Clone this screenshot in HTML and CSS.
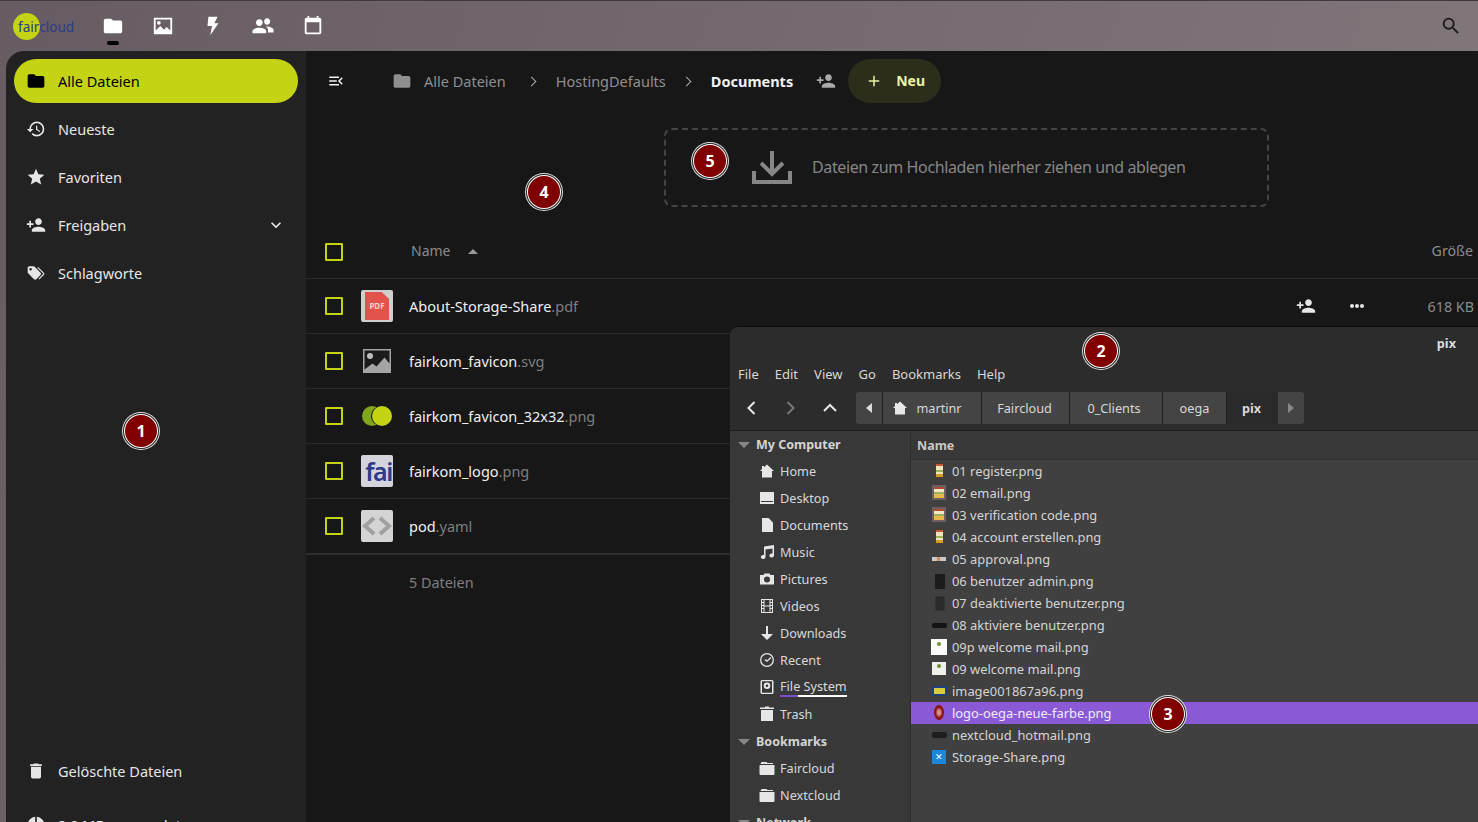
FILE: index.html
```html
<!DOCTYPE html>
<html lang="de">
<head>
    <meta charset="UTF-8">
    <meta name="viewport" content="width=device-width, initial-scale=1.0">
    <title>Alle Dateien - fairCloud</title>
    <link rel="stylesheet" href="styles.css">
</head>
<body>
    <svg class="icon-defs" aria-hidden="true">
        <symbol id="i-folder" viewBox="0 0 24 24"><path d="M10 4H4c-1.1 0-2 .9-2 2v12c0 1.1.9 2 2 2h16c1.1 0 2-.9 2-2V8c0-1.1-.9-2-2-2h-8l-2-2z"/></symbol>
        <symbol id="i-image" viewBox="0 0 24 24"><path fill-rule="evenodd" d="M2 3h20v18H2V3zm2 2v12l5-5 4 4 3-3 4 4V5H4zm3.500 1.500a2 2 0 1 1 0 4 2 2 0 0 1 0-4z"/></symbol>
        <symbol id="i-bolt" viewBox="0 0 24 24"><path d="M7 2h10l-3.500 7H18L9 22l2-10H6z"/></symbol>
        <symbol id="i-people" viewBox="0 0 24 24"><path d="M16.500 10.500c1.900 0 3.300-1.500 3.300-3.500s-1.400-3.500-3.300-3.500-3.300 1.500-3.300 3.500 1.400 3.500 3.300 3.500zm-8.500 1.500c2 0 3.700-1.700 3.700-3.800S10 4.500 8 4.500 4.300 6.100 4.300 8.200 6 12 8 12zm0 2c-2.700 0-7.500 1.300-7.500 3.700V20h15v-2.300C15.500 15.300 10.700 14 8 14zm8.500-1.500c-.4 0-.9 0-1.400.1 1.300.9 2.400 2.400 2.400 4.100V19h6v-2.800c0-2.300-4.500-3.700-7-3.700z"/></symbol>
        <symbol id="i-calendar" viewBox="0 0 24 24"><path d="M19 3h-1V1h-2v2H8V1H6v2H5c-1.100 0-2 .9-2 2v14c0 1.100.9 2 2 2h14c1.100 0 2-.9 2-2V5c0-1.100-.9-2-2-2zm0 16H5V8h14v11z"/></symbol>
        <symbol id="i-search" viewBox="0 0 24 24"><path d="M15.500 14h-.79l-.28-.27A6.471 6.471 0 0 0 16 9.500 6.500 6.500 0 1 0 9.500 16c1.610 0 3.090-.59 4.230-1.570l.27.28v.79l5 4.990L20.490 19l-4.990-5zm-6 0C7.010 14 5 11.990 5 9.500S7.010 5 9.500 5 14 7.010 14 9.500 11.990 14 9.500 14z"/></symbol>
        <symbol id="i-history" viewBox="0 0 24 24"><path d="M13 3a9 9 0 0 0-9 9H1l3.890 3.890.07.14L9 12H6c0-3.870 3.130-7 7-7s7 3.130 7 7-3.130 7-7 7c-1.930 0-3.680-.79-4.940-2.060l-1.420 1.420A8.954 8.954 0 0 0 13 21a9 9 0 0 0 0-18zm-1 5v5l4.280 2.540.72-1.210-3.500-2.080V8H12z"/></symbol>
        <symbol id="i-star" viewBox="0 0 24 24"><path d="M12 17.270L18.180 21l-1.640-7.030L22 9.240l-7.190-.61L12 2 9.190 8.630 2 9.240l5.460 4.730L5.820 21z"/></symbol>
        <symbol id="i-share" viewBox="0 0 24 24"><path d="M15 12c2.210 0 4-1.790 4-4s-1.790-4-4-4-4 1.790-4 4 1.790 4 4 4zm-9-2V7H4v3H1v2h3v3h2v-3h3v-2H6zm9 4c-2.670 0-8 1.340-8 4v2h16v-2c0-2.660-5.330-4-8-4z"/></symbol>
        <symbol id="i-tags" viewBox="0 0 24 24"><path d="M5.500 9A1.500 1.500 0 0 0 7 7.500 1.500 1.500 0 0 0 5.500 6 1.500 1.500 0 0 0 4 7.500 1.500 1.500 0 0 0 5.500 9m11.910 2.580c.36.36.59.86.59 1.420 0 .55-.22 1.050-.59 1.410l-5 5c-.36.36-.86.59-1.410.59-.55 0-1.050-.22-1.420-.59l-6.990-6.990C2.220 12.050 2 11.550 2 11V6c0-1.110.89-2 2-2h5c.55 0 1.050.22 1.410.58l7 7m-3.870-5.870l1-1 6.870 6.870c.37.36.59.87.59 1.420 0 .55-.22 1.050-.58 1.410l-5.380 5.380-1-1L20.750 13l-7.210-7.290z"/></symbol>
        <symbol id="i-trash" viewBox="0 0 24 24"><path d="M6 19c0 1.100.9 2 2 2h8c1.100 0 2-.9 2-2V7H6v12zM19 4h-3.500l-1-1h-5l-1 1H5v2h14V4z"/></symbol>
        <symbol id="i-chevron" viewBox="0 0 24 24"><path d="M7.410 8.590L12 13.170l4.590-4.580L18 10l-6 6-6-6z"/></symbol>
        <symbol id="i-menu" viewBox="0 0 24 24"><path d="M3 18h13v-2H3v2zm0-5h10v-2H3v2zm0-7v2h13V6H3zm18 9.590L17.420 12 21 8.410 19.590 7l-5 5 5 5L21 15.590z"/></symbol>
        <symbol id="i-plus" viewBox="0 0 24 24"><path d="M19 13h-6v6h-2v-6H5v-2h6V5h2v6h6v2z"/></symbol>
        <symbol id="i-pie" viewBox="0 0 24 24"><path d="M11 2v20c-5.070-.5-9-4.790-9-10s3.930-9.500 9-10zm2 0v9h9c-.47-4.750-4.250-8.530-9-9zm0 11v9c4.750-.47 8.530-4.250 9-9h-9z"/></symbol>
        <symbol id="i-home" viewBox="0 0 16 16"><path d="M8 1.500L15 8h-2v6.500H3V8H1l2-1.900V3h2v1.300z"/></symbol>
        <symbol id="i-desktop" viewBox="0 0 16 16"><path fill-rule="evenodd" d="M1 2h14v12H1V2zm1 9v1h12v-1H2z"/></symbol>
        <symbol id="i-doc" viewBox="0 0 16 16"><path d="M3 1h6.500L14 5.500V15H3V1z"/></symbol>
        <symbol id="i-music" viewBox="0 0 16 16"><path d="M5 2.500l10-1.500v10.500a2.300 2 0 1 1-1.500-1.900V4.500L6.500 5.500v7.500a2.300 2 0 1 1-1.500-1.900z"/></symbol>
        <symbol id="i-camera" viewBox="0 0 16 16"><path fill-rule="evenodd" d="M5.500 2.500h5l1 1.500H15v9.500H1V4h3.500zM8 5.500a3 3 0 1 0 0 6 3 3 0 0 0 0-6z"/></symbol>
        <symbol id="i-film" viewBox="0 0 16 16"><path fill-rule="evenodd" d="M2 1h12v14H2V1zm1 1v2h1.500V2H3zm0 3v2h1.500V5H3zm0 3v2h1.500V8H3zm0 3v3h1.500v-3H3zM5.500 2v5.500h5V2h-5zm0 6.500V14h5V8.500h-5zM11.500 2v2H13V2h-1.500zm0 3v2H13V5h-1.500zm0 3v2H13V8h-1.500zm0 3v3H13v-3h-1.500z"/></symbol>
        <symbol id="i-down" viewBox="0 0 16 16"><path d="M7 1h2v8h5l-6 6-6-6h5z"/></symbol>
        <symbol id="i-clock" viewBox="0 0 16 16"><path fill-rule="evenodd" d="M8 1a7 7 0 1 1 0 14A7 7 0 0 1 8 1zm0 1.300a5.700 5.700 0 1 0 0 11.400A5.700 5.700 0 0 0 8 2.300zM11.500 5l.9.9L8 10 5.500 8l.8-1L8 8.300z"/></symbol>
        <symbol id="i-disk" viewBox="0 0 16 16"><path fill-rule="evenodd" d="M3 1h10a1.500 1.500 0 0 1 1.500 1.500v11A1.500 1.500 0 0 1 13 15H3a1.500 1.500 0 0 1-1.500-1.500v-11A1.500 1.500 0 0 1 3 1zm0 1.300v11.400h10V2.300H3zm5 1.200a3.300 3.300 0 1 1 0 6.600 3.300 3.300 0 0 1 0-6.600zM8 5.500a1.300 1.300 0 1 0 0 2.600 1.300 1.300 0 0 0 0-2.600z"/></symbol>
        <symbol id="i-bin" viewBox="0 0 16 16"><path d="M2 4h12v11H2zM1 1.500h5V.5h4v1h5V3H1z"/></symbol>
        <symbol id="i-dir" viewBox="0 0 16 16"><path d="M2.500 2h5L8.500 3H14v1H1.500zM1 5h14a.5.500 0 0 1 .5.500V14a1 1 0 0 1-1 1h-13a1 1 0 0 1-1-1V5.500A.5.500 0 0 1 1 5z"/></symbol>
    </svg>

    <header class="topbar">
        <div class="logo"><span class="logo-dot"></span><span class="logo-text">fair<span class="logo-cloud">cloud</span></span></div>
        <nav class="apps">
            <a class="app app-active"><svg class="app-icon"><use href="#i-folder"/></svg></a>
            <a class="app"><svg class="app-icon"><use href="#i-image"/></svg></a>
            <a class="app"><svg class="app-icon"><use href="#i-bolt"/></svg></a>
            <a class="app"><svg class="app-icon"><use href="#i-people"/></svg></a>
            <a class="app"><svg class="app-icon"><use href="#i-calendar"/></svg></a>
        </nav>
        <svg class="search-icon"><use href="#i-search"/></svg>
    </header>

    <div class="layout">
        <aside class="sidebar">
            <a class="side-item side-active"><svg class="side-icon"><use href="#i-folder"/></svg>Alle Dateien</a>
            <a class="side-item"><svg class="side-icon"><use href="#i-history"/></svg>Neueste</a>
            <a class="side-item"><svg class="side-icon"><use href="#i-star"/></svg>Favoriten</a>
            <a class="side-item"><svg class="side-icon"><use href="#i-share"/></svg>Freigaben<svg class="side-chevron"><use href="#i-chevron"/></svg></a>
            <a class="side-item"><svg class="side-icon"><use href="#i-tags"/></svg>Schlagworte</a>
            <div class="side-bottom">
                <a class="side-item"><svg class="side-icon"><use href="#i-trash"/></svg>Gelöschte Dateien</a>
                <a class="side-item"><svg class="side-icon"><use href="#i-pie"/></svg>2.0 MB verwendet</a>
            </div>
        </aside>

        <main class="content">
            <div class="crumbs">
                <svg class="menu-toggle"><use href="#i-menu"/></svg>
                <svg class="crumb-folder"><use href="#i-folder"/></svg>
                <span class="crumb">Alle Dateien</span>
                <span class="crumb-sep crumb-sep-first"></span>
                <span class="crumb">HostingDefaults</span>
                <span class="crumb-sep"></span>
                <span class="crumb crumb-current">Documents</span>
                <svg class="crumb-share"><use href="#i-share"/></svg>
                <button class="new-btn"><svg class="new-plus"><use href="#i-plus"/></svg><span class="new-label">Neu</span></button>
            </div>

            <div class="dropzone">
                <svg class="drop-icon" viewBox="0 0 40 34"><path d="M20 0v22M9 12l11 11 11-11M2 20v11h36V20" fill="none" stroke="currentColor" stroke-width="4"/></svg>
                <span class="drop-text">Dateien zum Hochladen hierher ziehen und ablegen</span>
            </div>

            <div class="file-head">
                <span class="check"></span>
                <span class="head-name">Name</span>
                <span class="sort-arrow"></span>
                <span class="head-size">Größe</span>
            </div>

            <div class="file-row">
                <span class="check"></span>
                <span class="thumb thumb-pdf"><span class="pdf-page">PDF</span></span>
                <span class="file-name">About-Storage-Share<span class="ext">.pdf</span></span>
                <svg class="row-share"><use href="#i-share"/></svg>
                <span class="row-dots"><i></i><i></i><i></i></span>
                <span class="file-size">618 KB</span>
            </div>
            <div class="file-row">
                <span class="check"></span>
                <span class="thumb"><svg class="thumb-image" viewBox="0 0 28 24"><path fill="#a5a5a5" d="M0 0h28v24H0z"/><path fill="#1b1b1b" d="M1.500 1.500h25v13l-5-6-8 9-4-3-8 6z"/><circle cx="7" cy="7" r="3" fill="#bdbdbd"/></svg></span>
                <span class="file-name">fairkom_favicon<span class="ext">.svg</span></span>
            </div>
            <div class="file-row">
                <span class="check"></span>
                <span class="thumb"><span class="dots-logo"><span class="dot-back"></span><span class="dot-front"></span></span></span>
                <span class="file-name">fairkom_favicon_32x32<span class="ext">.png</span></span>
            </div>
            <div class="file-row">
                <span class="check"></span>
                <span class="thumb thumb-fai">fai</span>
                <span class="file-name">fairkom_logo<span class="ext">.png</span></span>
            </div>
            <div class="file-row file-row-last">
                <span class="check"></span>
                <span class="thumb thumb-code"><svg viewBox="0 0 32 32" class="code-icon"><path d="M13 8L4 16l9 8M19 8l9 8-9 8" fill="none" stroke="#a0a0a0" stroke-width="4"/></svg></span>
                <span class="file-name">pod<span class="ext">.yaml</span></span>
            </div>
            <div class="file-count">5 Dateien</div>
        </main>
    </div>

    <section class="nemo">
        <div class="nemo-title">pix</div>
        <div class="nemo-menu">
            <span>File</span><span>Edit</span><span>View</span><span>Go</span><span>Bookmarks</span><span>Help</span>
        </div>
        <div class="nemo-toolbar">
            <svg class="nav-arrow" viewBox="0 0 16 16"><path d="M10.500 2L4.500 8l6 6"/></svg>
            <svg class="nav-arrow nav-off" viewBox="0 0 16 16"><path d="M5.500 2l6 6-6 6"/></svg>
            <svg class="nav-arrow" viewBox="0 0 16 16"><path d="M2 11l6-6 6 6"/></svg>
            <div class="pathbar">
                <span class="path-arrow"><span class="tri-left"></span></span>
                <span class="path-seg path-home"><svg class="path-icon"><use href="#i-home"/></svg>martinr</span>
                <span class="path-seg path-fair">Faircloud</span>
                <span class="path-seg path-clients">0_Clients</span>
                <span class="path-seg path-oega">oega</span>
                <span class="path-seg path-pix">pix</span>
                <span class="path-arrow path-end"><span class="tri-right"></span></span>
            </div>
        </div>
        <div class="nemo-body">
            <div class="places">
                <div class="place-head"><span class="tri-down"></span>My Computer</div>
                <div class="place"><svg class="place-icon"><use href="#i-home"/></svg>Home</div>
                <div class="place"><svg class="place-icon"><use href="#i-desktop"/></svg>Desktop</div>
                <div class="place"><svg class="place-icon"><use href="#i-doc"/></svg>Documents</div>
                <div class="place"><svg class="place-icon"><use href="#i-music"/></svg>Music</div>
                <div class="place"><svg class="place-icon"><use href="#i-camera"/></svg>Pictures</div>
                <div class="place"><svg class="place-icon"><use href="#i-film"/></svg>Videos</div>
                <div class="place"><svg class="place-icon"><use href="#i-down"/></svg>Downloads</div>
                <div class="place"><svg class="place-icon"><use href="#i-clock"/></svg>Recent</div>
                <div class="place"><svg class="place-icon"><use href="#i-disk"/></svg><span class="place-mounted">File System</span></div>
                <div class="place"><svg class="place-icon"><use href="#i-bin"/></svg>Trash</div>
                <div class="place-head"><span class="tri-down"></span>Bookmarks</div>
                <div class="place"><svg class="place-icon"><use href="#i-dir"/></svg>Faircloud</div>
                <div class="place"><svg class="place-icon"><use href="#i-dir"/></svg>Nextcloud</div>
                <div class="place-head"><span class="tri-down"></span>Network</div>
            </div>
            <div class="listing">
                <div class="list-head">Name</div>
                <div class="list-row"><span class="mini mini-phone"></span>01 register.png</div>
                <div class="list-row"><span class="mini mini-mail"></span>02 email.png</div>
                <div class="list-row"><span class="mini mini-mail"></span>03 verification code.png</div>
                <div class="list-row"><span class="mini mini-phone"></span>04 account erstellen.png</div>
                <div class="list-row"><span class="mini mini-strip"></span>05 approval.png</div>
                <div class="list-row"><span class="mini mini-dark"></span>06 benutzer admin.png</div>
                <div class="list-row"><span class="mini mini-dark mini-grey"></span>07 deaktivierte benutzer.png</div>
                <div class="list-row"><span class="mini mini-bar"></span>08 aktiviere benutzer.png</div>
                <div class="list-row"><span class="mini mini-white"></span>09p welcome mail.png</div>
                <div class="list-row"><span class="mini mini-white mini-small"></span>09 welcome mail.png</div>
                <div class="list-row"><span class="mini mini-badge"></span>image001867a96.png</div>
                <div class="list-row list-selected"><span class="mini mini-oega"></span>logo-oega-neue-farbe.png</div>
                <div class="list-row"><span class="mini mini-bar mini-tall"></span>nextcloud_hotmail.png</div>
                <div class="list-row"><span class="mini mini-blue">✕</span>Storage-Share.png</div>
            </div>
        </div>
    </section>

    <span class="marker marker-1">1</span>
    <span class="marker marker-2">2</span>
    <span class="marker marker-3">3</span>
    <span class="marker marker-4">4</span>
    <span class="marker marker-5">5</span>
</body>
</html>
```

FILE: styles.css
```css
* { box-sizing: border-box; }
html, body { height: 100%; }
body {
    margin: 0;
    overflow: hidden;
    background: linear-gradient(110deg, #675c63 0%, #857a7e 100%);
    color: #e4e4e4;
    font-family: "Noto Sans", sans-serif;
    font-size: 14px;
}
svg { fill: currentColor; display: block; flex: none; }
.icon-defs { position: absolute; width: 0; height: 0; }

/* top bar */
.topbar {
    height: 51px;
    display: flex;
    align-items: center;
    padding-left: 13px;
    border-top: 1px solid #3e3a3e;
}
.logo { position: relative; width: 75px; height: 27px; display: flex; align-items: center; }
.logo-dot { width: 27px; height: 27px; border-radius: 50%; background: #c4d313; }
.logo-text {
    position: absolute;
    left: 5px;
    top: 4px;
    font-size: 13.600px;
    line-height: 19px;
    color: #2d3a8c;
}
.apps { display: flex; }
.app { position: relative; width: 50px; height: 50px; display: flex; align-items: center; justify-content: center; color: #fff; }
.app-icon { width: 22px; height: 22px; }
.app-active::after {
    content: "";
    position: absolute;
    left: 19px;
    bottom: 6px;
    width: 12px;
    height: 4px;
    border-radius: 2px;
    background: #000;
}
.search-icon { width: 22px; height: 22px; margin-left: auto; margin-right: 16px; color: #1c1c1c; }

.layout { display: flex; height: 771px; }

/* left navigation */
.sidebar {
    width: 300px;
    margin-left: 6px;
    padding: 8px 8px 0;
    display: flex;
    flex-direction: column;
    gap: 4px;
    background: #232222;
    border-top-left-radius: 18px;
}
.side-item {
    height: 44px;
    flex: none;
    display: flex;
    align-items: center;
    padding-left: 12px;
    border-radius: 22px;
    font-size: 14.500px;
    color: #e6e6e6;
}
.side-icon { width: 20px; height: 20px; margin-right: 12px; }
.side-active { background: #c4d313; color: #000; }
.side-chevron { width: 20px; height: 20px; margin-left: auto; margin-right: 12px; }
.side-bottom { margin-top: auto; margin-bottom: -25px; display: flex; flex-direction: column; gap: 10px; }

/* files */
.content { flex: 1; background: #171717; }
.crumbs { height: 44px; margin-top: 8px; display: flex; align-items: center; }
.menu-toggle { width: 18px; height: 18px; margin-left: 21px; color: #efefef; }
.crumb-folder { width: 20px; height: 20px; margin-left: 47px; margin-right: 12px; color: #8f8f8f; }
.crumb { font-size: 14.500px; color: #8f8f8f; }
.crumb-sep { width: 7px; height: 7px; margin: 0 21px 0 17px; border-top: 1px solid #aaa; border-right: 1px solid #aaa; transform: rotate(45deg); }
.crumb-sep-first { margin: 0 21px 0 22px; }
.crumb-current { font-weight: 700; color: #f2f2f2; }
.crumb-share { width: 20px; height: 20px; margin-left: 23px; margin-right: 13px; color: #a9a9a9; }
.new-btn {
    width: 93px;
    height: 44px;
    margin-left: -1px;
    display: flex;
    align-items: center;
    padding: 0 0 0 17px;
    border: none;
    border-radius: 22px;
    background: #2d2d1b;
    color: #eef2a8;
    font-family: inherit;
    font-size: 14px;
    font-weight: 700;
}
.new-plus { width: 18px; height: 18px; margin-right: 13px; }
.new-label { padding-bottom: 2px; }

.dropzone {
    width: 605px;
    height: 79px;
    margin: 25px 0 0 358px;
    display: flex;
    align-items: center;
    padding-left: 86px;
    border: 2px dashed #444;
    border-radius: 8px;
    color: #868686;
    font-size: 16px;
}
.drop-icon { width: 40px; height: 34px; margin-right: 20px; }
.drop-text { padding-bottom: 2px; letter-spacing: -0.38px; }

.file-head, .file-row { display: flex; align-items: center; padding-left: 19px; }
.file-head { height: 54px; margin-top: 18px; border-bottom: 1px solid #2b2b2b; color: #8b8b8b; }
.file-row { height: 55px; border-bottom: 1px solid #2b2b2b; }
.file-row-last { height: 56px; border-bottom: 2px solid #2e2e2e; }
.check { width: 18px; height: 18px; flex: none; border: 2px solid #c4d313; border-radius: 1px; }
.head-name { margin-left: 68px; padding-bottom: 2px; font-size: 14px; }
.sort-arrow { width: 0; height: 0; margin-left: 18px; border: 5px solid transparent; border-top: 0; border-bottom: 5px solid #999; }
.head-size { margin-left: auto; margin-right: 5px; padding-bottom: 2px; font-size: 14.200px; }
.thumb { width: 32px; height: 32px; flex: none; margin-left: 18px; margin-right: 16px; display: flex; align-items: center; justify-content: center; border-radius: 2px; }
.thumb-pdf { background: #cfcfcf; }
.pdf-page {
    width: 24px;
    height: 28px;
    padding-top: 8px;
    background: #e2534c;
    clip-path: polygon(0 0, 70% 0, 100% 25%, 100% 100%, 0 100%);
    color: #f5d4d2;
    font-size: 8px;
    line-height: 12px;
    font-weight: 700;
    text-align: center;
}
.thumb-image { width: 28px; height: 24px; }
.dots-logo { position: relative; width: 32px; height: 20px; }
.dot-back, .dot-front { position: absolute; top: 0; width: 20px; height: 20px; border-radius: 50%; }
.dot-back { left: 1px; background: #7fa61e; }
.dot-front { left: 11px; background: #c4d313; box-shadow: -1px 0 0 #171717; }
.thumb-fai { background: #d4d4dc; color: #2d3a8c; font-size: 25px; font-weight: 600; line-height: 32px; letter-spacing: -1.500px; padding-left: 3px; }
.thumb-code { background: #d4d4d4; }
.code-icon { width: 32px; height: 32px; }
.file-name { font-size: 14.500px; color: #efefef; }
.ext { color: #7f7f7f; }
.row-share { width: 20px; height: 20px; margin-left: auto; color: #e6e6e6; }
.row-dots { display: flex; gap: 1px; margin-left: 34px; }
.row-dots i { width: 4px; height: 4px; border-radius: 50%; background: #e6e6e6; }
.file-size { width: 114px; padding-right: 4px; text-align: right; font-size: 14.300px; color: #8b8b8b; }
.file-count { margin: 18px 0 0 103px; font-size: 14.400px; color: #7f7f7f; }

/* nemo window on top of the page */
.nemo {
    position: absolute;
    left: 730px;
    top: 326px;
    width: 748px;
    height: 496px;
    overflow: hidden;
    display: flex;
    flex-direction: column;
    background: #2c2c2c;
    border-top: 1px solid #0c0c0c;
    border-top-left-radius: 8px;
    color: #d8d8d8;
    font-size: 12.700px;
}
.nemo-title { height: 34px; padding: 7px 22px 0 0; text-align: right; font-weight: 700; color: #dcdcdc; }
.nemo-menu { height: 25px; display: flex; align-items: center; gap: 16px; padding-left: 8px; font-size: 13px; }
.nemo-toolbar { height: 45px; flex: none; display: flex; align-items: center; padding-left: 14px; padding-bottom: 1px; border-bottom: 1px solid #1f1f1f; }
.nav-arrow { width: 16px; height: 16px; margin-right: 22px; fill: none; stroke: #e8e8e8; stroke-width: 2; }
.nav-off { stroke: #777; margin-right: 24px; }
.pathbar { height: 32px; margin-left: -4px; display: flex; align-items: stretch; border-radius: 3px; overflow: hidden; background: #1f1f1f; gap: 1px; }
.path-arrow { width: 26px; display: flex; align-items: center; justify-content: center; background: #444; }
.path-seg { display: flex; align-items: center; justify-content: center; background: #444; }
.path-home { width: 98px; padding-right: 10px; }
.path-fair { width: 87px; padding-right: 2px; }
.path-clients { width: 92px; padding-right: 4px; }
.path-oega { width: 63px; }
.path-pix { width: 51px; padding-right: 2px; background: #2a2a2a; font-weight: 700; }
.path-end { margin-left: -1px; }
.path-icon { width: 16px; height: 16px; margin-right: 8px; color: #e8e8e8; }
.tri-left { border: 5px solid transparent; border-left: 0; border-right: 6px solid #ddd; }
.tri-right { border: 5px solid transparent; border-right: 0; border-left: 6px solid #888; }
.tri-down { width: 0; height: 0; margin-left: 8px; margin-right: 6px; border: 6px solid transparent; border-bottom: 0; border-top: 6px solid #868686; }

.nemo-body { flex: 1; display: flex; min-height: 0; }
.places { width: 181px; flex: none; background: #383838; border-right: 1px solid #2c2c2c; }
.place-head { height: 27px; display: flex; align-items: center; font-size: 12.500px; font-weight: 700; color: #d4d4d4; }
.place { height: 27px; display: flex; align-items: center; padding-left: 29px; padding-bottom: 2px; }
.place-icon { width: 16px; height: 16px; margin-right: 5px; color: #e6e6e6; }
.place-mounted { border-bottom: 2px solid; border-image: linear-gradient(90deg, #7d4fd0 0 28%, #fff 28% 100%) 1; }

.listing { flex: 1; background: #404040; color: #d4d4d4; font-size: 12.900px; }
.list-head { height: 29px; display: flex; align-items: center; padding-left: 6px; background: #383838; border-bottom: 1px solid #2f2f2f; font-size: 12.500px; font-weight: 700; color: #c8c8c8; }
.list-row { height: 22px; display: flex; align-items: center; padding-left: 41px; position: relative; }
.list-selected { background: #8a5ad6; color: #f0eaf9; }

/* tiny previews in the listing */
.mini { position: absolute; left: 20px; top: 3px; width: 16px; height: 16px; }
.mini-phone { left: 24px; width: 9px; top: 3px; height: 15px; border: 1px solid #4a3f2c; border-radius: 1px; background: linear-gradient(#c9583a 0 18%, #efe6bd 18% 50%, #9fb060 50% 62%, #efe6bd 62% 80%, #d59a2c 80%); }
.mini-mail { left: 21px; width: 14px; top: 3px; height: 15px; border: 2px solid #6e6060; background: linear-gradient(#b04a30 0 20%, #f0e8c4 20% 50%, #9fb060 50% 65%, #e8b84a 65%); }
.mini-strip { left: 21px; width: 14px; top: 9px; height: 4px; background: linear-gradient(90deg, #c9c9c9 0 35%, #d88a5a 35% 60%, #c9c9c9 60%); }
.mini-dark { left: 24px; width: 10px; top: 4px; height: 15px; border-radius: 1px; background: #1b1b1b; }
.mini-grey { background: #2a2a2a; border: 1px solid #333; }
.mini-bar { left: 21px; width: 15px; top: 9px; height: 5px; border-radius: 2px; background: #141414; }
.mini-tall { height: 6px; top: 8px; background: #1e1e1e; }
.mini-white { left: 20px; top: 3px; background: #fbfbfb; }
.mini-white::after { content: ""; position: absolute; left: 6px; top: 3px; width: 4px; height: 4px; border-radius: 50%; background: #6f8f2a; }
.mini-small { left: 21px; top: 4px; width: 14px; height: 13px; background: #f0f0ec; }
.mini-small::after { left: 5px; top: 2px; }
.mini-badge { left: 21px; top: 6px; width: 15px; height: 10px; background: #d8cc3c; border: 2px solid #1d3f7c; }
.mini-oega { left: 23px; top: 3px; width: 10px; height: 15px; border-radius: 50%; background: radial-gradient(#d89090 0 20%, #8a1416 50%); }
.mini-blue { left: 21px; top: 4px; width: 14px; height: 14px; background: #1d86d6; color: #fff; font-size: 9px; line-height: 14px; text-align: center; }

/* numbered callouts */
.marker {
    position: absolute;
    width: 32px;
    height: 32px;
    display: flex;
    align-items: center;
    justify-content: center;
    border-radius: 50%;
    background: #800000;
    color: #fff;
    font-size: 16px;
    font-weight: 700;
    box-shadow: 0 0 0 1px #fff, 0 0 0 2px #222, 0 0 0 3px #ddd;
}
.marker-1 { left: 125px; top: 415px; }
.marker-2 { left: 1085px; top: 335px; }
.marker-3 { left: 1152px; top: 698px; }
.marker-4 { left: 528px; top: 176px; }
.marker-5 { left: 694px; top: 145px; }
```
